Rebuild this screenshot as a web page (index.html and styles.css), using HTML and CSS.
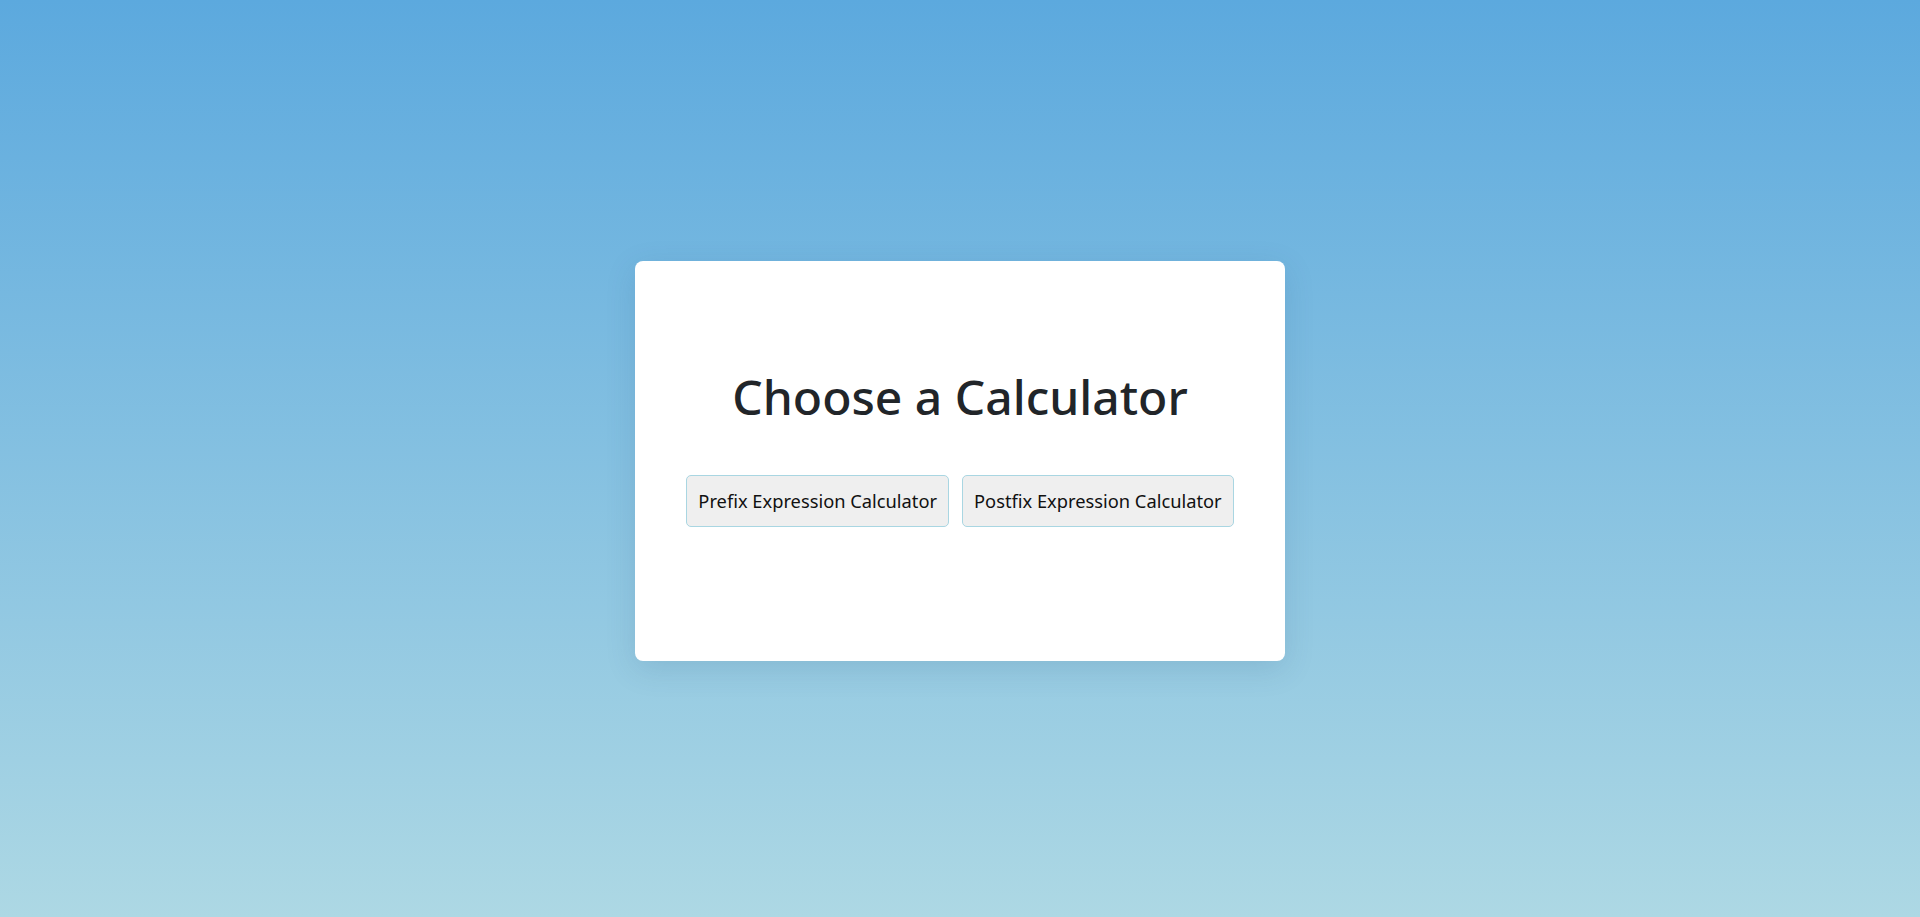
FILE: index.html
```html
<!DOCTYPE html>
<html lang="en">
<head>
<meta charset="utf-8">
<title>Choose a Calculator</title>
<link rel="stylesheet" href="styles.css">
</head>
<body>
<main class="page">
  <section class="card">
    <h1 class="title">Choose a Calculator</h1>
    <div class="actions">
      <button class="btn" type="button">Prefix Expression Calculator</button>
      <button class="btn" type="button">Postfix Expression Calculator</button>
    </div>
  </section>
</main>
</body>
</html>
```

FILE: styles.css
```css
html, body {
  margin: 0;
  height: 100%;
}

body {
  font-family: "Noto Sans", "Open Sans", "Liberation Sans", sans-serif;
  background: linear-gradient(to bottom, #5ca9de 0%, #add8e4 100%);
  color: #212529;
}

.page {
  height: 100%;
  display: flex;
  align-items: center;
  justify-content: center;
}

.card {
  box-sizing: border-box;
  width: 650px;
  height: 400px;
  margin-top: 4px;
  background: #ffffff;
  border-radius: 8px;
  box-shadow: 0 8px 30px rgba(40, 80, 120, 0.15);
  display: flex;
  flex-direction: column;
  align-items: center;
  padding-top: 107px;
}

.title {
  margin: 0 0 50px;
  font-size: 48px;
  font-weight: 500;
  line-height: 1.2;
  color: #212529;
}

.actions {
  display: flex;
  gap: 13px;
}

.btn {
  font-family: inherit;
  font-size: 18.3px;
  line-height: 30px;
  padding: 10px 11px;
  color: #111;
  background: #efefef;
  border: 1px solid #a9d6e2;
  border-radius: 5px;
  cursor: pointer;
}
```
